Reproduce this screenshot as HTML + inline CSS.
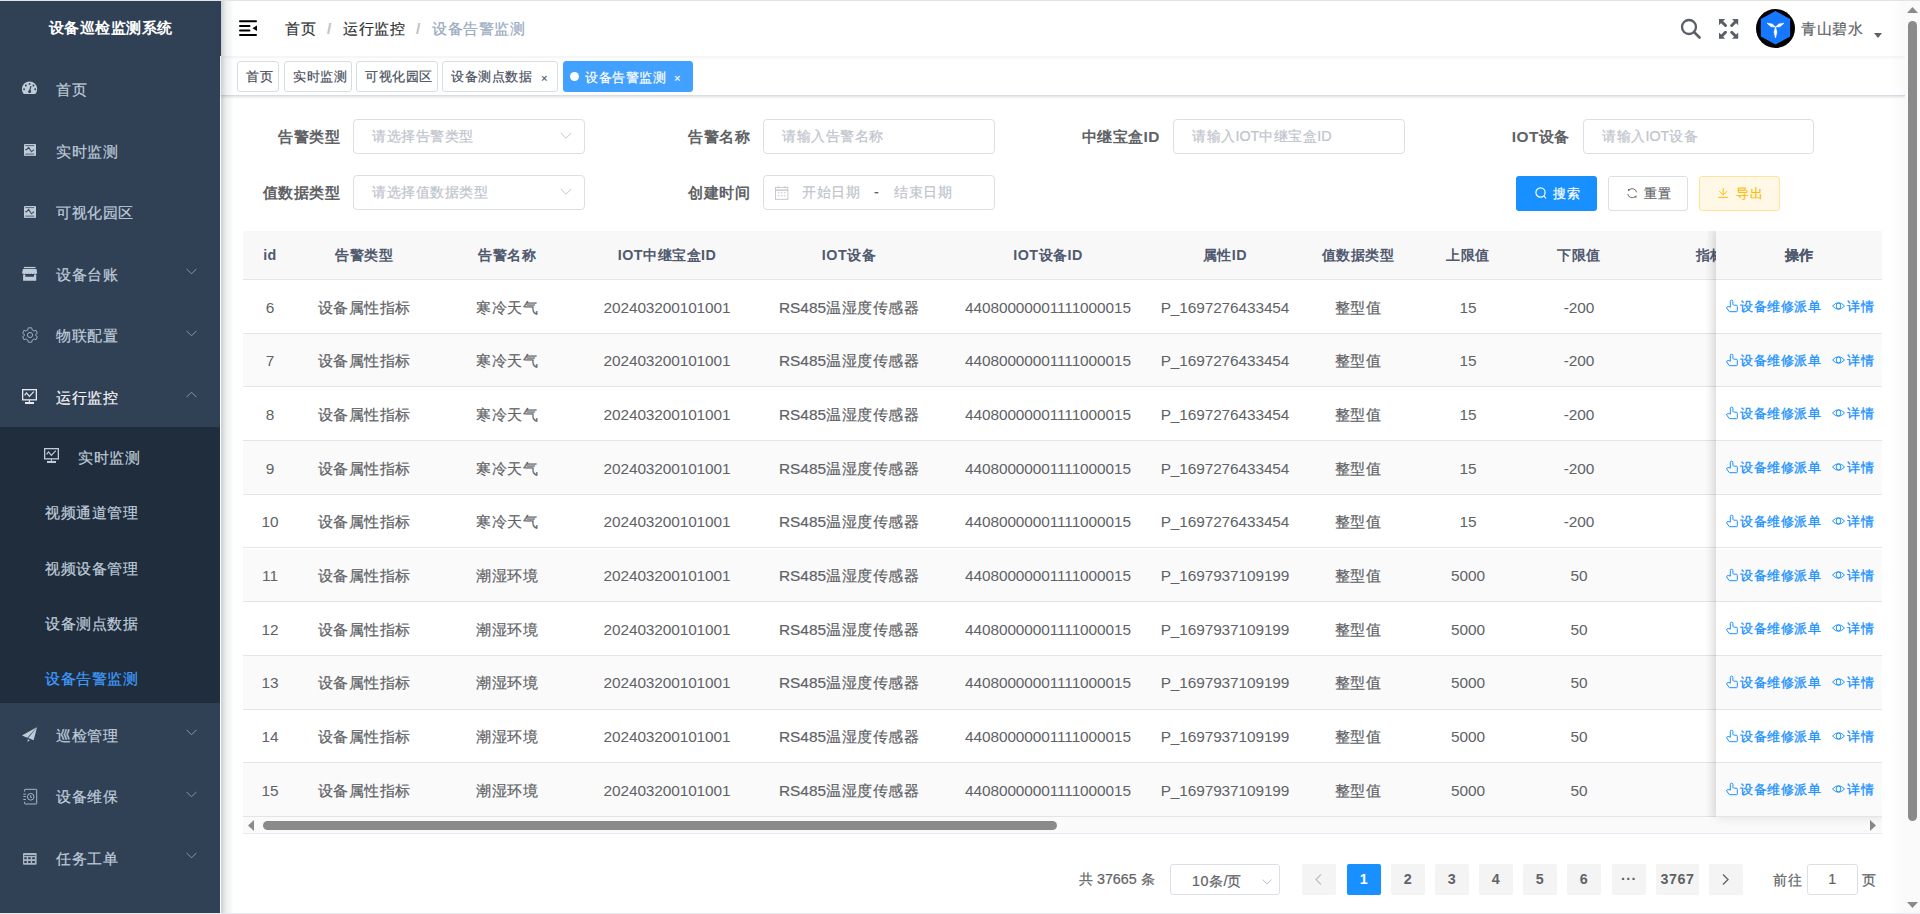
<!DOCTYPE html>
<html><head><meta charset="utf-8">
<style>
*{box-sizing:border-box;margin:0;padding:0}
html,body{width:1920px;height:914px;overflow:hidden;background:#fff;font-family:"Liberation Sans",sans-serif;}
body{-webkit-text-stroke:0.2px currentColor;letter-spacing:0.5px}
.a{letter-spacing:0}
.cell.n{letter-spacing:-0.1px}
.hd .cell,.lbl,#side .title,.pg,.cell.n{-webkit-text-stroke:0}
body{position:relative}
.abs{position:absolute}
#side{position:absolute;left:0;top:0;width:220px;height:914px;background:#304156;}
#side .title{position:absolute;left:0;top:0;width:221px;height:56px;line-height:56px;text-align:center;color:#fff;font-weight:bold;font-size:15.4px;}
.mi{position:absolute;left:0;width:220px;height:62px;color:#bfcbd9;font-size:15.4px;}
.mi svg.ic{position:absolute;left:22px;top:23px;width:16px;height:16px}
.mi .tx{position:absolute;left:56px;top:1.5px;line-height:62px;white-space:nowrap}
.mi svg.ar{position:absolute;left:186px;top:26px;width:11px;height:7px}
.sub{position:absolute;left:0;top:427px;width:220px;height:276px;background:#1f2d3d}
.si{position:absolute;left:0;width:220px;height:55px;line-height:55px;color:#bfcbd9;font-size:15.4px;}
.si .tx{position:absolute;left:45px;white-space:nowrap}
  .sep{display:inline-block;width:7px;margin:0 10px 0 10px;color:#c0c4cc;font-weight:bold;text-align:center}
#nav{position:absolute;left:221px;top:0;width:1684px;height:56px;background:#fff;z-index:2;box-shadow:0 1px 4px rgba(0,21,41,.08)}
#tags{position:absolute;left:221px;top:56px;width:1684px;height:40px;background:#fff;border-bottom:1px solid #d8dce5;box-shadow:0 1px 3px 0 rgba(0,0,0,.12),0 0 3px 0 rgba(0,0,0,.04);}
.tag{position:absolute;top:5px;height:31px;line-height:29px;border:1px solid #d8dce5;border-radius:3px;color:#495060;font-size:13.2px;padding:0 8px;background:#fff;white-space:nowrap}
.tag.act{background:#42a0ff;border-color:#42a0ff;color:#fff}
.lbl{position:absolute;font-size:15.4px;font-weight:bold;color:#606266;white-space:nowrap;text-align:right;line-height:35px}
.inp{position:absolute;height:35px;border:1px solid #dcdfe6;border-radius:4px;background:#fff;font-size:14.3px;color:#c0c4cc;line-height:33px;padding-left:18px;white-space:nowrap}
.btn{position:absolute;height:35px;border-radius:3px;font-size:13.2px;line-height:33px;white-space:nowrap}
#tbl{position:absolute;left:243px;top:231px;width:1639px;height:603px;overflow:hidden}
.row{position:absolute;left:0;width:1639px;height:54px;border-bottom:1px solid #dfe6ec;}
.cell{position:absolute;top:1.5px;height:52.7px;line-height:52.7px;text-align:center;font-size:15.4px;color:#606266;white-space:nowrap}
.hd .cell{font-weight:bold;color:#515a6e;font-size:14.3px;height:48px;line-height:48px;top:0}
.op{position:absolute;color:#1890ff;font-size:13.2px;white-space:nowrap;-webkit-text-stroke:0.3px #1890ff}
.pg{position:absolute;top:864px;height:31px;width:34px;line-height:31px;text-align:center;background:#f4f4f5;color:#606266;font-size:14.3px;font-weight:bold;border-radius:2px}
</style></head><body>

<div id="side"><div class="title">设备巡检监测系统</div>
<div class="mi" style="top:57.4px;color:#bfcbd9"><svg class="ic" style="left:22px;top:24px;width:16px;height:14px" viewBox="0 0 16 14"><path d="M1.8 13.1 A7.65 7.65 0 1 1 13.3 13.1 Z" fill="#bfcbd9"/><circle cx="7.6" cy="2.9" r="0.95" fill="#304156"/><circle cx="3.9" cy="4.5" r="0.95" fill="#304156"/><circle cx="11.4" cy="4.5" r="0.95" fill="#304156"/><circle cx="2.1" cy="8.3" r="0.95" fill="#304156"/><circle cx="13.2" cy="8.3" r="0.95" fill="#304156"/><path d="M8.9 5.2 L7.7 10" stroke="#304156" stroke-width="1.2"/><circle cx="7.6" cy="10.4" r="1.5" fill="#304156"/></svg><span class="tx">首页</span></div>
<div class="mi" style="top:119px;color:#bfcbd9"><svg class="ic" style="left:24px;top:25px;width:12px;height:12px" viewBox="0 0 12 12"><rect x="0" y="0" width="12" height="12" rx="1" fill="#bfcbd9"/><path d="M1.3 1.6 H10.2" stroke="#4b5a6e" stroke-width="0.9"/><path d="M1.3 5.6 L2.7 5.6 L4.6 3.4 L7.5 7.8 L10.1 5.6" fill="none" stroke="#3d4b5e" stroke-width="1.1"/><rect x="1.3" y="9.3" width="8.9" height="2" fill="#7f8c9c"/></svg><span class="tx">实时监测</span></div>
<div class="mi" style="top:180.6px;color:#bfcbd9"><svg class="ic" style="left:24px;top:25px;width:12px;height:12px" viewBox="0 0 12 12"><rect x="0" y="0" width="12" height="12" rx="1" fill="#bfcbd9"/><path d="M1.3 1.6 H10.2" stroke="#4b5a6e" stroke-width="0.9"/><path d="M1.3 5.6 L2.7 5.6 L4.6 3.4 L7.5 7.8 L10.1 5.6" fill="none" stroke="#3d4b5e" stroke-width="1.1"/><rect x="1.3" y="9.3" width="8.9" height="2" fill="#7f8c9c"/></svg><span class="tx">可视化园区</span></div>
<div class="mi" style="top:242.2px;color:#bfcbd9"><svg class="ic" style="left:22px;top:23.80px;width:16px;height:16px" viewBox="0 0 16 16"><rect x="1.9" y="0.9" width="11.6" height="1.3" fill="#bfcbd9"/><path d="M0.9 2.9 H14.5 L15.2 7.2 Q13.6 8.6 12.2 7.4 Q10.8 8.6 9.4 7.4 Q8 8.6 6.6 7.4 Q5.2 8.6 3.8 7.4 Q2.4 8.6 0 7.2 Z" fill="#bfcbd9"/><path d="M1.1 8.6 H3.3 V10.8 H12 V8.6 H14.2 V14.8 H1.1 Z" fill="#bfcbd9"/></svg><span class="tx">设备台账</span><svg class="ar" viewBox="0 0 11 7"><path d="M0.5 0.8 L5.5 5.8 L10.5 0.8" fill="none" stroke="#909399" stroke-width="1"/></svg></div>
<div class="mi" style="top:303.8px;color:#bfcbd9"><svg class="ic" style="left:21.5px;top:23.20px;width:16px;height:16px" viewBox="0 0 16 16"><path d="M6.3 0.8 L9.7 0.8 L10.2 2.9 L12.1 4.0 L14.1 3.3 L15.3 6.3 L13.6 7.5 L13.6 8.5 L15.3 9.7 L14.1 12.7 L12.1 12.0 L10.2 13.1 L9.7 15.2 L6.3 15.2 L5.8 13.1 L3.9 12.0 L1.9 12.7 L0.7 9.7 L2.4 8.5 L2.4 7.5 L0.7 6.3 L1.9 3.3 L3.9 4.0 L5.8 2.9 Z" fill="none" stroke="#aab5c3" stroke-width="0.9" stroke-linejoin="round"/><circle cx="8" cy="8" r="2.6" fill="none" stroke="#aab5c3" stroke-width="0.9"/></svg><span class="tx">物联配置</span><svg class="ar" viewBox="0 0 11 7"><path d="M0.5 0.8 L5.5 5.8 L10.5 0.8" fill="none" stroke="#909399" stroke-width="1"/></svg></div>
<div class="mi" style="top:365.4px;color:#f4f4f5"><svg class="ic" style="left:22px;top:23.60px;width:15px;height:16px" viewBox="0 0 15 16"><rect x="0.65" y="0.65" width="13.7" height="10.2" fill="none" stroke="#e8ebef" stroke-width="1.3"/><path d="M2.6 6.4 L4.5 3.9 L7.4 7.3 L11.8 2.6" fill="none" stroke="#e8ebef" stroke-width="1.2"/><path d="M7.4 11 V13.5" stroke="#e8ebef" stroke-width="1.1"/><rect x="3" y="13" width="9" height="2" fill="#e8ebef"/></svg><span class="tx">运行监控</span><svg class="ar" viewBox="0 0 11 7"><path d="M0.5 6.2 L5.5 1.2 L10.5 6.2" fill="none" stroke="#909399" stroke-width="1"/></svg></div>
<div class="sub">
<div class="si" style="top:3px"><svg class="ic" style="position:absolute;left:44px;top:18px;width:15px;height:16px" viewBox="0 0 15 16"><rect x="0.65" y="0.65" width="13.7" height="10.2" fill="none" stroke="#bfcbd9" stroke-width="1.3"/><path d="M2.6 6.4 L4.5 3.9 L7.4 7.3 L11.8 2.6" fill="none" stroke="#bfcbd9" stroke-width="1.2"/><path d="M7.4 11 V13.5" stroke="#bfcbd9" stroke-width="1.1"/><rect x="3" y="13" width="9" height="2" fill="#bfcbd9"/></svg><span class="tx" style="left:78px">实时监测</span></div>
<div class="si" style="top:58px"><span class="tx">视频通道管理</span></div>
<div class="si" style="top:114px"><span class="tx">视频设备管理</span></div>
<div class="si" style="top:169px"><span class="tx">设备测点数据</span></div>
<div class="si" style="top:224px;color:#409eff"><span class="tx">设备告警监测</span></div>
</div>
<div class="mi" style="top:703px;color:#bfcbd9"><svg class="ic" style="left:22px;top:23.00px;width:16px;height:17px" viewBox="0 0 16 17"><path d="M15.1 1.1 L0 9.6 L5.3 11.8 Z" fill="#bfcbd9"/><path d="M15.1 1.3 L6.2 12.1 L11.6 14.2 Z" fill="#bfcbd9"/><path d="M5.8 13 L7.6 14.3 L5.6 15.9 Z" fill="#bfcbd9"/></svg><span class="tx">巡检管理</span><svg class="ar" viewBox="0 0 11 7"><path d="M0.5 0.8 L5.5 5.8 L10.5 0.8" fill="none" stroke="#909399" stroke-width="1"/></svg></div>
<div class="mi" style="top:764.6px;color:#bfcbd9"><svg class="ic" style="left:22px;top:23.40px;width:16px;height:17px" viewBox="0 0 16 17"><path d="M2.6 3.5 V1.8 Q2.6 1.3 3.1 1.3 H14.2 Q14.7 1.3 14.7 1.8 V15.5 Q14.7 16 14.2 16 H3.1 Q2.6 16 2.6 15.5 V13.8" fill="none" stroke="#aab5c3" stroke-width="1"/><path d="M1.3 6.2 H3.8 M1.3 8.6 H3.8 M1.3 11.5 H3.8" stroke="#aab5c3" stroke-width="1"/><circle cx="8.7" cy="8.8" r="3.3" fill="none" stroke="#aab5c3" stroke-width="1"/><path d="M8.6 7.3 V9.3 H10" fill="none" stroke="#aab5c3" stroke-width="1"/></svg><span class="tx">设备维保</span><svg class="ar" viewBox="0 0 11 7"><path d="M0.5 0.8 L5.5 5.8 L10.5 0.8" fill="none" stroke="#909399" stroke-width="1"/></svg></div>
<div class="mi" style="top:826.2px;color:#bfcbd9"><svg class="ic" style="left:23px;top:26.80px;width:14px;height:12px" viewBox="0 0 14 12"><rect x="0" y="0" width="13.6" height="11.8" rx="0.8" fill="#aab5c3"/><rect x="1.3" y="2" width="11.2" height="0.8" fill="#2c3a4d"/><rect x="1.3" y="4.3" width="2.4" height="1.9" fill="#2c3a4d"/><rect x="5.2" y="4.3" width="2.5" height="1.9" fill="#2c3a4d"/><rect x="9.2" y="4.3" width="2.6" height="1.9" fill="#2c3a4d"/><rect x="1.3" y="8" width="2.4" height="2" fill="#2c3a4d"/><rect x="5.2" y="8" width="2.5" height="2" fill="#2c3a4d"/><rect x="9.2" y="8" width="2.6" height="2" fill="#2c3a4d"/></svg><span class="tx">任务工单</span><svg class="ar" viewBox="0 0 11 7"><path d="M0.5 0.8 L5.5 5.8 L10.5 0.8" fill="none" stroke="#909399" stroke-width="1"/></svg></div>
</div>
<div class="abs" style="left:220px;top:56px;width:1px;height:858px;background:#fff"></div>
<div id="nav">
<svg class="abs" style="left:18px;top:20px;width:18px;height:16px" viewBox="0 0 18 16"><rect x="0" y="0.3" width="18" height="2" rx="1" fill="#000"/><rect x="0" y="5" width="11.5" height="2" rx="1" fill="#000"/><rect x="0" y="9.6" width="11.5" height="2" rx="1" fill="#000"/><rect x="0" y="14" width="18" height="2" rx="1" fill="#000"/><path d="M13.5 8.2 L18 5.5 L18 11z" fill="#000"/></svg>
<div class="abs" style="left:64px;top:0;line-height:58px;font-size:15.4px;color:#303133;white-space:nowrap">首页<span class="sep">/</span>运行监控<span class="sep">/</span><span style="color:#97a8be">设备告警监测</span></div>
<svg class="abs" style="left:1459px;top:18px;width:22px;height:22px" viewBox="0 0 22 22"><circle cx="9" cy="9" r="7" fill="none" stroke="#5a5e66" stroke-width="2.3"/><path d="M14 14 L19.5 19.5" stroke="#5a5e66" stroke-width="2.6" stroke-linecap="round"/></svg>
<svg class="abs" style="left:1498px;top:19px;width:20px;height:20px" viewBox="0 0 20 20" fill="#5a5e66" stroke="#5a5e66"><g stroke="none"><path d="M0 0h6.2L0 6.2z"/><path d="M19.2 0h-6.2L19.2 6.2z"/><path d="M0 19.8h6.2L0 13.6z"/><path d="M19.2 19.8h-6.2L19.2 13.6z"/></g><path d="M2.5 2.5 L6.5 6.5 M16.7 2.5 L12.7 6.5 M2.5 17.3 L6.5 13.3 M16.7 17.3 L12.7 13.3" stroke-width="3" stroke-linecap="round" fill="none"/></svg>
<svg class="abs" style="left:1535px;top:9px;width:39px;height:39px" viewBox="0 0 39 39"><circle cx="19.5" cy="19.5" r="19.5" fill="#000"/><path d="M19.5 1.9 L34.1 10.1 L34.1 27.4 L19.5 35.6 L4.8 27.4 L4.8 10.1z" fill="#1677ff"/><path d="M19.50 18.10 L16.28 15.03 L11.00 14.20 L15.07 17.66 Z M19.50 18.10 L23.93 17.66 L28.00 14.20 L22.72 15.03 Z M19.50 18.10 L18.05 23.01 L19.50 29.00 L20.95 23.01 Z" fill="#fff" stroke="#fff" stroke-width="0.6" stroke-linejoin="round"/></svg>
<div class="abs" style="left:1580px;top:0;line-height:58px;font-size:15.4px;color:#606266;white-space:nowrap">青山碧水</div>
<svg class="abs" style="left:1653px;top:33px;width:8px;height:5px" viewBox="0 0 8 5"><path d="M0 0h8l-4 5z" fill="#606266"/></svg>
</div>
<div id="tags">
<div class="tag" style="left:16px;width:42px">首页</div>
<div class="tag" style="left:63px;width:68px">实时监测</div>
<div class="tag" style="left:135px;width:82px">可视化园区</div>
<div class="tag" style="left:221px;width:116px">设备测点数据<span style="position:absolute;left:98px;top:1.5px;font-size:11px">×</span></div>
<div class="tag act" style="left:342px;width:130px"><span style="position:absolute;left:6px;top:10px;width:9px;height:9px;border-radius:50%;background:#fff"></span><span style="position:absolute;left:21px;top:0.5px;-webkit-text-stroke:0.2px #fff">设备告警监测</span><span style="position:absolute;left:110px;top:1.5px;font-size:11px">×</span></div>
</div>
<div class="abs" style="left:220px;top:0;width:1px;height:56px;background:#304156"></div>
<div class="abs" style="left:221px;top:0;width:13px;height:914px;z-index:3;background:linear-gradient(to right,rgba(0,21,41,.2),rgba(0,21,41,.07) 40%,rgba(0,21,41,0))"></div>
<div class="lbl" style="left:190px;top:119px;width:150px">告警类型</div>
<div class="lbl" style="left:190px;top:175px;width:150px">值数据类型</div>
<div class="lbl" style="left:600px;top:119px;width:150px">告警名称</div>
<div class="lbl" style="left:600px;top:175px;width:150px">创建时间</div>
<div class="lbl" style="left:1010px;top:119px;width:150px">中继宝盒ID</div>
<div class="lbl" style="left:1420px;top:119px;width:150px">IOT设备</div>
<div class="inp" style="left:353px;top:119px;width:232px">请选择告警类型<svg style="position:absolute;right:12px;top:12.3px;width:12px;height:8px" viewBox="0 0 12 8"><path d="M0.8 1 L6 6.2 L11.2 1" fill="none" stroke="#b8bcc4" stroke-width="0.85"/></svg></div>
<div class="inp" style="left:353px;top:175px;width:232px">请选择值数据类型<svg style="position:absolute;right:12px;top:12.3px;width:12px;height:8px" viewBox="0 0 12 8"><path d="M0.8 1 L6 6.2 L11.2 1" fill="none" stroke="#b8bcc4" stroke-width="0.85"/></svg></div>
<div class="inp" style="left:763px;top:119px;width:232px">请输入告警名称</div>
<div class="inp" style="left:763px;top:175px;width:232px;padding-left:0"><svg style="position:absolute;left:11px;top:8.5px;width:14px;height:15px" viewBox="0 0 14 15"><rect x="0.5" y="2.4" width="12.4" height="11.9" fill="none" stroke="#c0c4cc" stroke-width="0.9"/><rect x="0.5" y="4.5" width="12.4" height="1.3" fill="#c0c4cc"/><path d="M3.4 1 V3.3 M10 1 V3.3" stroke="#c0c4cc" stroke-width="0.9"/><path d="M2.9 7.8h1.6M5.9 7.8h1.6M8.9 7.8h1.6M2.9 10.8h1.6M5.9 10.8h1.6M8.9 10.8h1.6" stroke="#c0c4cc" stroke-width="1"/></svg><span style="position:absolute;left:38px">开始日期</span><span style="position:absolute;left:110px;color:#606266">-</span><span style="position:absolute;left:130px">结束日期</span></div>
<div class="inp" style="left:1173px;top:119px;width:232px">请输入<span class="a">IOT</span>中继宝盒<span class="a">ID</span></div>
<div class="inp" style="left:1583px;top:119px;width:231px">请输入<span class="a">IOT</span>设备</div>
<div class="btn" style="left:1516px;top:176px;width:81px;background:#1890ff;color:#fff"><svg style="position:absolute;left:19px;top:11px;width:12px;height:13px" viewBox="0 0 12 13"><circle cx="5.5" cy="5.5" r="4.6" fill="none" stroke="#fff" stroke-width="1.2"/><path d="M9 9 L11 11.5" stroke="#fff" stroke-width="1.2"/></svg><span style="position:absolute;left:37px;top:1px">搜索</span></div>
<div class="btn" style="left:1608px;top:176px;width:80px;border:1px solid #dcdfe6;color:#606266"><svg style="position:absolute;left:17.5px;top:10.5px;width:11px;height:11px" viewBox="0 0 11 11"><path d="M1.9 2.1 A4.5 4.5 0 0 1 9.65 4.4 M8.4 8.4 A4.5 4.5 0 0 1 0.75 6" fill="none" stroke="#606266" stroke-width="0.9"/><path d="M0.9 1.0 L3.4 1.3 L1.3 3.5z M9.6 9.6 L7.1 9.4 L9.3 7.2z" fill="#606266"/></svg><span style="position:absolute;left:35px">重置</span></div>
<div class="btn" style="left:1699px;top:176px;width:81px;border:1px solid #ffe399;background:#fff8e6;color:#ffba00"><svg style="position:absolute;left:17.5px;top:10px;width:11px;height:12px" viewBox="0 0 11 12"><path d="M5.2 1 V7.6 M1.3 4.2 L5.2 7.8 L9.1 4.2 M0.2 10.4 H10.2" fill="none" stroke="#ffba00" stroke-width="0.95"/></svg><span style="position:absolute;left:36px">导出</span></div>
<div id="tbl">
<div class="row hd" style="top:0;height:49px;background:#f8f8f9">
<div class="cell" style="left:0px;width:54px">id</div>
<div class="cell" style="left:54px;width:134px">告警类型</div>
<div class="cell" style="left:188px;width:152px">告警名称</div>
<div class="cell" style="left:340px;width:168px">IOT中继宝盒ID</div>
<div class="cell" style="left:508px;width:196px">IOT设备</div>
<div class="cell" style="left:704px;width:202px">IOT设备ID</div>
<div class="cell" style="left:906px;width:152px">属性ID</div>
<div class="cell" style="left:1058px;width:114px">值数据类型</div>
<div class="cell" style="left:1172px;width:106px">上限值</div>
<div class="cell" style="left:1278px;width:116px">下限值</div>
<div class="cell" style="left:1398.5px;width:166px">指标名称</div>
</div>
<div class="row" style="top:49.0px;height:53.7px;background:#fff">
<div class="cell n" style="left:0px;width:54px">6</div>
<div class="cell" style="left:54px;width:134px">设备属性指标</div>
<div class="cell" style="left:188px;width:152px">寒冷天气</div>
<div class="cell n" style="left:340px;width:168px">202403200101001</div>
<div class="cell" style="left:508px;width:196px"><span class="a">RS485</span>温湿度传感器</div>
<div class="cell n" style="left:704px;width:202px">44080000001111000015</div>
<div class="cell n" style="left:906px;width:152px">P_1697276433454</div>
<div class="cell" style="left:1058px;width:114px">整型值</div>
<div class="cell n" style="left:1172px;width:106px">15</div>
<div class="cell n" style="left:1278px;width:116px">-200</div>
<div class="cell n" style="left:1394px;width:166px"></div>
</div>
<div class="row" style="top:102.7px;height:53.7px;background:#fafafa">
<div class="cell n" style="left:0px;width:54px">7</div>
<div class="cell" style="left:54px;width:134px">设备属性指标</div>
<div class="cell" style="left:188px;width:152px">寒冷天气</div>
<div class="cell n" style="left:340px;width:168px">202403200101001</div>
<div class="cell" style="left:508px;width:196px"><span class="a">RS485</span>温湿度传感器</div>
<div class="cell n" style="left:704px;width:202px">44080000001111000015</div>
<div class="cell n" style="left:906px;width:152px">P_1697276433454</div>
<div class="cell" style="left:1058px;width:114px">整型值</div>
<div class="cell n" style="left:1172px;width:106px">15</div>
<div class="cell n" style="left:1278px;width:116px">-200</div>
<div class="cell n" style="left:1394px;width:166px"></div>
</div>
<div class="row" style="top:156.4px;height:53.7px;background:#fff">
<div class="cell n" style="left:0px;width:54px">8</div>
<div class="cell" style="left:54px;width:134px">设备属性指标</div>
<div class="cell" style="left:188px;width:152px">寒冷天气</div>
<div class="cell n" style="left:340px;width:168px">202403200101001</div>
<div class="cell" style="left:508px;width:196px"><span class="a">RS485</span>温湿度传感器</div>
<div class="cell n" style="left:704px;width:202px">44080000001111000015</div>
<div class="cell n" style="left:906px;width:152px">P_1697276433454</div>
<div class="cell" style="left:1058px;width:114px">整型值</div>
<div class="cell n" style="left:1172px;width:106px">15</div>
<div class="cell n" style="left:1278px;width:116px">-200</div>
<div class="cell n" style="left:1394px;width:166px"></div>
</div>
<div class="row" style="top:210.1px;height:53.7px;background:#fafafa">
<div class="cell n" style="left:0px;width:54px">9</div>
<div class="cell" style="left:54px;width:134px">设备属性指标</div>
<div class="cell" style="left:188px;width:152px">寒冷天气</div>
<div class="cell n" style="left:340px;width:168px">202403200101001</div>
<div class="cell" style="left:508px;width:196px"><span class="a">RS485</span>温湿度传感器</div>
<div class="cell n" style="left:704px;width:202px">44080000001111000015</div>
<div class="cell n" style="left:906px;width:152px">P_1697276433454</div>
<div class="cell" style="left:1058px;width:114px">整型值</div>
<div class="cell n" style="left:1172px;width:106px">15</div>
<div class="cell n" style="left:1278px;width:116px">-200</div>
<div class="cell n" style="left:1394px;width:166px"></div>
</div>
<div class="row" style="top:263.8px;height:53.7px;background:#fff">
<div class="cell n" style="left:0px;width:54px">10</div>
<div class="cell" style="left:54px;width:134px">设备属性指标</div>
<div class="cell" style="left:188px;width:152px">寒冷天气</div>
<div class="cell n" style="left:340px;width:168px">202403200101001</div>
<div class="cell" style="left:508px;width:196px"><span class="a">RS485</span>温湿度传感器</div>
<div class="cell n" style="left:704px;width:202px">44080000001111000015</div>
<div class="cell n" style="left:906px;width:152px">P_1697276433454</div>
<div class="cell" style="left:1058px;width:114px">整型值</div>
<div class="cell n" style="left:1172px;width:106px">15</div>
<div class="cell n" style="left:1278px;width:116px">-200</div>
<div class="cell n" style="left:1394px;width:166px"></div>
</div>
<div class="row" style="top:317.5px;height:53.7px;background:#fafafa">
<div class="cell n" style="left:0px;width:54px">11</div>
<div class="cell" style="left:54px;width:134px">设备属性指标</div>
<div class="cell" style="left:188px;width:152px">潮湿环境</div>
<div class="cell n" style="left:340px;width:168px">202403200101001</div>
<div class="cell" style="left:508px;width:196px"><span class="a">RS485</span>温湿度传感器</div>
<div class="cell n" style="left:704px;width:202px">44080000001111000015</div>
<div class="cell n" style="left:906px;width:152px">P_1697937109199</div>
<div class="cell" style="left:1058px;width:114px">整型值</div>
<div class="cell n" style="left:1172px;width:106px">5000</div>
<div class="cell n" style="left:1278px;width:116px">50</div>
<div class="cell n" style="left:1394px;width:166px"></div>
</div>
<div class="row" style="top:371.2px;height:53.7px;background:#fff">
<div class="cell n" style="left:0px;width:54px">12</div>
<div class="cell" style="left:54px;width:134px">设备属性指标</div>
<div class="cell" style="left:188px;width:152px">潮湿环境</div>
<div class="cell n" style="left:340px;width:168px">202403200101001</div>
<div class="cell" style="left:508px;width:196px"><span class="a">RS485</span>温湿度传感器</div>
<div class="cell n" style="left:704px;width:202px">44080000001111000015</div>
<div class="cell n" style="left:906px;width:152px">P_1697937109199</div>
<div class="cell" style="left:1058px;width:114px">整型值</div>
<div class="cell n" style="left:1172px;width:106px">5000</div>
<div class="cell n" style="left:1278px;width:116px">50</div>
<div class="cell n" style="left:1394px;width:166px"></div>
</div>
<div class="row" style="top:424.9px;height:53.7px;background:#fafafa">
<div class="cell n" style="left:0px;width:54px">13</div>
<div class="cell" style="left:54px;width:134px">设备属性指标</div>
<div class="cell" style="left:188px;width:152px">潮湿环境</div>
<div class="cell n" style="left:340px;width:168px">202403200101001</div>
<div class="cell" style="left:508px;width:196px"><span class="a">RS485</span>温湿度传感器</div>
<div class="cell n" style="left:704px;width:202px">44080000001111000015</div>
<div class="cell n" style="left:906px;width:152px">P_1697937109199</div>
<div class="cell" style="left:1058px;width:114px">整型值</div>
<div class="cell n" style="left:1172px;width:106px">5000</div>
<div class="cell n" style="left:1278px;width:116px">50</div>
<div class="cell n" style="left:1394px;width:166px"></div>
</div>
<div class="row" style="top:478.6px;height:53.7px;background:#fff">
<div class="cell n" style="left:0px;width:54px">14</div>
<div class="cell" style="left:54px;width:134px">设备属性指标</div>
<div class="cell" style="left:188px;width:152px">潮湿环境</div>
<div class="cell n" style="left:340px;width:168px">202403200101001</div>
<div class="cell" style="left:508px;width:196px"><span class="a">RS485</span>温湿度传感器</div>
<div class="cell n" style="left:704px;width:202px">44080000001111000015</div>
<div class="cell n" style="left:906px;width:152px">P_1697937109199</div>
<div class="cell" style="left:1058px;width:114px">整型值</div>
<div class="cell n" style="left:1172px;width:106px">5000</div>
<div class="cell n" style="left:1278px;width:116px">50</div>
<div class="cell n" style="left:1394px;width:166px"></div>
</div>
<div class="row" style="top:532.3px;height:53.7px;background:#fafafa">
<div class="cell n" style="left:0px;width:54px">15</div>
<div class="cell" style="left:54px;width:134px">设备属性指标</div>
<div class="cell" style="left:188px;width:152px">潮湿环境</div>
<div class="cell n" style="left:340px;width:168px">202403200101001</div>
<div class="cell" style="left:508px;width:196px"><span class="a">RS485</span>温湿度传感器</div>
<div class="cell n" style="left:704px;width:202px">44080000001111000015</div>
<div class="cell n" style="left:906px;width:152px">P_1697937109199</div>
<div class="cell" style="left:1058px;width:114px">整型值</div>
<div class="cell n" style="left:1172px;width:106px">5000</div>
<div class="cell n" style="left:1278px;width:116px">50</div>
<div class="cell n" style="left:1394px;width:166px"></div>
</div>
<div class="abs" style="left:0;top:586px;width:1639px;height:17px;background:#fafafa;border-bottom:1px solid #e6ebf5"></div>
<svg class="abs" style="left:5px;top:589px;width:6px;height:11px" viewBox="0 0 6 11"><path d="M6 0 L0 5.5 L6 11z" fill="#8a8a8a"/></svg>
<div class="abs" style="left:20px;top:590px;width:794px;height:9px;border-radius:4.5px;background:#8a8a8a"></div>
<svg class="abs" style="left:1627px;top:589px;width:6px;height:11px" viewBox="0 0 6 11"><path d="M0 0 L6 5.5 L0 11z" fill="#8a8a8a"/></svg>
<div class="abs" style="left:1462px;top:0;width:11px;height:586px;background:linear-gradient(to right,rgba(0,0,0,0),rgba(0,0,0,.06))"></div>
<div class="abs" style="left:1473px;top:0;width:166px;height:586px;box-shadow:0 0 10px rgba(0,0,0,.12)">
<div class="abs" style="left:0;top:0;width:166px;height:49px;background:#f8f8f9;border-bottom:1px solid #dfe6ec;text-align:center;line-height:48px;font-size:14.3px;font-weight:bold;color:#515a6e">操作</div>
<div class="abs" style="left:0;top:49.0px;width:166px;height:53.7px;background:#fff;border-bottom:1px solid #dfe6ec">
<div class="abs" style="left:10px;top:0;width:156px;height:52.7px"><svg style="position:absolute;left:-4px;top:16px;width:22px;height:20px" viewBox="0 0 22 20"><path d="M8.3 11.2 V5.4 Q8.3 4.2 9.6 4.2 Q10.9 4.2 10.9 5.4 V8.3 Q11.2 9.2 12.2 9.2 H14.3 Q15.3 9.2 15.3 10.3 V14.9 Q15.3 15.7 14.5 15.7 H7.8 Q7.2 15.7 6.9 15.2 L4.7 11.9 Q4.3 11.2 5.1 10.8 Q6.8 10 8.3 11.2" fill="none" stroke="#1890ff" stroke-width="1" stroke-linejoin="round"/></svg><span class="op" style="left:14px;top:1px;line-height:52.7px">设备维修派单</span><svg style="position:absolute;left:106px;top:21px;width:13px;height:10px" viewBox="0 0 13 10"><path d="M0.5 5 Q6.5 -1.6 12.5 5 Q6.5 11.6 0.5 5 Z" fill="none" stroke="#1890ff" stroke-width="0.95"/><ellipse cx="6.5" cy="5" rx="2.3" ry="2.9" fill="none" stroke="#1890ff" stroke-width="0.95"/></svg><span class="op" style="left:121px;top:1px;line-height:52.7px">详情</span></div>
</div>
<div class="abs" style="left:0;top:102.7px;width:166px;height:53.7px;background:#fafafa;border-bottom:1px solid #dfe6ec">
<div class="abs" style="left:10px;top:0;width:156px;height:52.7px"><svg style="position:absolute;left:-4px;top:16px;width:22px;height:20px" viewBox="0 0 22 20"><path d="M8.3 11.2 V5.4 Q8.3 4.2 9.6 4.2 Q10.9 4.2 10.9 5.4 V8.3 Q11.2 9.2 12.2 9.2 H14.3 Q15.3 9.2 15.3 10.3 V14.9 Q15.3 15.7 14.5 15.7 H7.8 Q7.2 15.7 6.9 15.2 L4.7 11.9 Q4.3 11.2 5.1 10.8 Q6.8 10 8.3 11.2" fill="none" stroke="#1890ff" stroke-width="1" stroke-linejoin="round"/></svg><span class="op" style="left:14px;top:1px;line-height:52.7px">设备维修派单</span><svg style="position:absolute;left:106px;top:21px;width:13px;height:10px" viewBox="0 0 13 10"><path d="M0.5 5 Q6.5 -1.6 12.5 5 Q6.5 11.6 0.5 5 Z" fill="none" stroke="#1890ff" stroke-width="0.95"/><ellipse cx="6.5" cy="5" rx="2.3" ry="2.9" fill="none" stroke="#1890ff" stroke-width="0.95"/></svg><span class="op" style="left:121px;top:1px;line-height:52.7px">详情</span></div>
</div>
<div class="abs" style="left:0;top:156.4px;width:166px;height:53.7px;background:#fff;border-bottom:1px solid #dfe6ec">
<div class="abs" style="left:10px;top:0;width:156px;height:52.7px"><svg style="position:absolute;left:-4px;top:16px;width:22px;height:20px" viewBox="0 0 22 20"><path d="M8.3 11.2 V5.4 Q8.3 4.2 9.6 4.2 Q10.9 4.2 10.9 5.4 V8.3 Q11.2 9.2 12.2 9.2 H14.3 Q15.3 9.2 15.3 10.3 V14.9 Q15.3 15.7 14.5 15.7 H7.8 Q7.2 15.7 6.9 15.2 L4.7 11.9 Q4.3 11.2 5.1 10.8 Q6.8 10 8.3 11.2" fill="none" stroke="#1890ff" stroke-width="1" stroke-linejoin="round"/></svg><span class="op" style="left:14px;top:1px;line-height:52.7px">设备维修派单</span><svg style="position:absolute;left:106px;top:21px;width:13px;height:10px" viewBox="0 0 13 10"><path d="M0.5 5 Q6.5 -1.6 12.5 5 Q6.5 11.6 0.5 5 Z" fill="none" stroke="#1890ff" stroke-width="0.95"/><ellipse cx="6.5" cy="5" rx="2.3" ry="2.9" fill="none" stroke="#1890ff" stroke-width="0.95"/></svg><span class="op" style="left:121px;top:1px;line-height:52.7px">详情</span></div>
</div>
<div class="abs" style="left:0;top:210.1px;width:166px;height:53.7px;background:#fafafa;border-bottom:1px solid #dfe6ec">
<div class="abs" style="left:10px;top:0;width:156px;height:52.7px"><svg style="position:absolute;left:-4px;top:16px;width:22px;height:20px" viewBox="0 0 22 20"><path d="M8.3 11.2 V5.4 Q8.3 4.2 9.6 4.2 Q10.9 4.2 10.9 5.4 V8.3 Q11.2 9.2 12.2 9.2 H14.3 Q15.3 9.2 15.3 10.3 V14.9 Q15.3 15.7 14.5 15.7 H7.8 Q7.2 15.7 6.9 15.2 L4.7 11.9 Q4.3 11.2 5.1 10.8 Q6.8 10 8.3 11.2" fill="none" stroke="#1890ff" stroke-width="1" stroke-linejoin="round"/></svg><span class="op" style="left:14px;top:1px;line-height:52.7px">设备维修派单</span><svg style="position:absolute;left:106px;top:21px;width:13px;height:10px" viewBox="0 0 13 10"><path d="M0.5 5 Q6.5 -1.6 12.5 5 Q6.5 11.6 0.5 5 Z" fill="none" stroke="#1890ff" stroke-width="0.95"/><ellipse cx="6.5" cy="5" rx="2.3" ry="2.9" fill="none" stroke="#1890ff" stroke-width="0.95"/></svg><span class="op" style="left:121px;top:1px;line-height:52.7px">详情</span></div>
</div>
<div class="abs" style="left:0;top:263.8px;width:166px;height:53.7px;background:#fff;border-bottom:1px solid #dfe6ec">
<div class="abs" style="left:10px;top:0;width:156px;height:52.7px"><svg style="position:absolute;left:-4px;top:16px;width:22px;height:20px" viewBox="0 0 22 20"><path d="M8.3 11.2 V5.4 Q8.3 4.2 9.6 4.2 Q10.9 4.2 10.9 5.4 V8.3 Q11.2 9.2 12.2 9.2 H14.3 Q15.3 9.2 15.3 10.3 V14.9 Q15.3 15.7 14.5 15.7 H7.8 Q7.2 15.7 6.9 15.2 L4.7 11.9 Q4.3 11.2 5.1 10.8 Q6.8 10 8.3 11.2" fill="none" stroke="#1890ff" stroke-width="1" stroke-linejoin="round"/></svg><span class="op" style="left:14px;top:1px;line-height:52.7px">设备维修派单</span><svg style="position:absolute;left:106px;top:21px;width:13px;height:10px" viewBox="0 0 13 10"><path d="M0.5 5 Q6.5 -1.6 12.5 5 Q6.5 11.6 0.5 5 Z" fill="none" stroke="#1890ff" stroke-width="0.95"/><ellipse cx="6.5" cy="5" rx="2.3" ry="2.9" fill="none" stroke="#1890ff" stroke-width="0.95"/></svg><span class="op" style="left:121px;top:1px;line-height:52.7px">详情</span></div>
</div>
<div class="abs" style="left:0;top:317.5px;width:166px;height:53.7px;background:#fafafa;border-bottom:1px solid #dfe6ec">
<div class="abs" style="left:10px;top:0;width:156px;height:52.7px"><svg style="position:absolute;left:-4px;top:16px;width:22px;height:20px" viewBox="0 0 22 20"><path d="M8.3 11.2 V5.4 Q8.3 4.2 9.6 4.2 Q10.9 4.2 10.9 5.4 V8.3 Q11.2 9.2 12.2 9.2 H14.3 Q15.3 9.2 15.3 10.3 V14.9 Q15.3 15.7 14.5 15.7 H7.8 Q7.2 15.7 6.9 15.2 L4.7 11.9 Q4.3 11.2 5.1 10.8 Q6.8 10 8.3 11.2" fill="none" stroke="#1890ff" stroke-width="1" stroke-linejoin="round"/></svg><span class="op" style="left:14px;top:1px;line-height:52.7px">设备维修派单</span><svg style="position:absolute;left:106px;top:21px;width:13px;height:10px" viewBox="0 0 13 10"><path d="M0.5 5 Q6.5 -1.6 12.5 5 Q6.5 11.6 0.5 5 Z" fill="none" stroke="#1890ff" stroke-width="0.95"/><ellipse cx="6.5" cy="5" rx="2.3" ry="2.9" fill="none" stroke="#1890ff" stroke-width="0.95"/></svg><span class="op" style="left:121px;top:1px;line-height:52.7px">详情</span></div>
</div>
<div class="abs" style="left:0;top:371.2px;width:166px;height:53.7px;background:#fff;border-bottom:1px solid #dfe6ec">
<div class="abs" style="left:10px;top:0;width:156px;height:52.7px"><svg style="position:absolute;left:-4px;top:16px;width:22px;height:20px" viewBox="0 0 22 20"><path d="M8.3 11.2 V5.4 Q8.3 4.2 9.6 4.2 Q10.9 4.2 10.9 5.4 V8.3 Q11.2 9.2 12.2 9.2 H14.3 Q15.3 9.2 15.3 10.3 V14.9 Q15.3 15.7 14.5 15.7 H7.8 Q7.2 15.7 6.9 15.2 L4.7 11.9 Q4.3 11.2 5.1 10.8 Q6.8 10 8.3 11.2" fill="none" stroke="#1890ff" stroke-width="1" stroke-linejoin="round"/></svg><span class="op" style="left:14px;top:1px;line-height:52.7px">设备维修派单</span><svg style="position:absolute;left:106px;top:21px;width:13px;height:10px" viewBox="0 0 13 10"><path d="M0.5 5 Q6.5 -1.6 12.5 5 Q6.5 11.6 0.5 5 Z" fill="none" stroke="#1890ff" stroke-width="0.95"/><ellipse cx="6.5" cy="5" rx="2.3" ry="2.9" fill="none" stroke="#1890ff" stroke-width="0.95"/></svg><span class="op" style="left:121px;top:1px;line-height:52.7px">详情</span></div>
</div>
<div class="abs" style="left:0;top:424.9px;width:166px;height:53.7px;background:#fafafa;border-bottom:1px solid #dfe6ec">
<div class="abs" style="left:10px;top:0;width:156px;height:52.7px"><svg style="position:absolute;left:-4px;top:16px;width:22px;height:20px" viewBox="0 0 22 20"><path d="M8.3 11.2 V5.4 Q8.3 4.2 9.6 4.2 Q10.9 4.2 10.9 5.4 V8.3 Q11.2 9.2 12.2 9.2 H14.3 Q15.3 9.2 15.3 10.3 V14.9 Q15.3 15.7 14.5 15.7 H7.8 Q7.2 15.7 6.9 15.2 L4.7 11.9 Q4.3 11.2 5.1 10.8 Q6.8 10 8.3 11.2" fill="none" stroke="#1890ff" stroke-width="1" stroke-linejoin="round"/></svg><span class="op" style="left:14px;top:1px;line-height:52.7px">设备维修派单</span><svg style="position:absolute;left:106px;top:21px;width:13px;height:10px" viewBox="0 0 13 10"><path d="M0.5 5 Q6.5 -1.6 12.5 5 Q6.5 11.6 0.5 5 Z" fill="none" stroke="#1890ff" stroke-width="0.95"/><ellipse cx="6.5" cy="5" rx="2.3" ry="2.9" fill="none" stroke="#1890ff" stroke-width="0.95"/></svg><span class="op" style="left:121px;top:1px;line-height:52.7px">详情</span></div>
</div>
<div class="abs" style="left:0;top:478.6px;width:166px;height:53.7px;background:#fff;border-bottom:1px solid #dfe6ec">
<div class="abs" style="left:10px;top:0;width:156px;height:52.7px"><svg style="position:absolute;left:-4px;top:16px;width:22px;height:20px" viewBox="0 0 22 20"><path d="M8.3 11.2 V5.4 Q8.3 4.2 9.6 4.2 Q10.9 4.2 10.9 5.4 V8.3 Q11.2 9.2 12.2 9.2 H14.3 Q15.3 9.2 15.3 10.3 V14.9 Q15.3 15.7 14.5 15.7 H7.8 Q7.2 15.7 6.9 15.2 L4.7 11.9 Q4.3 11.2 5.1 10.8 Q6.8 10 8.3 11.2" fill="none" stroke="#1890ff" stroke-width="1" stroke-linejoin="round"/></svg><span class="op" style="left:14px;top:1px;line-height:52.7px">设备维修派单</span><svg style="position:absolute;left:106px;top:21px;width:13px;height:10px" viewBox="0 0 13 10"><path d="M0.5 5 Q6.5 -1.6 12.5 5 Q6.5 11.6 0.5 5 Z" fill="none" stroke="#1890ff" stroke-width="0.95"/><ellipse cx="6.5" cy="5" rx="2.3" ry="2.9" fill="none" stroke="#1890ff" stroke-width="0.95"/></svg><span class="op" style="left:121px;top:1px;line-height:52.7px">详情</span></div>
</div>
<div class="abs" style="left:0;top:532.3px;width:166px;height:53.7px;background:#fafafa;border-bottom:1px solid #dfe6ec">
<div class="abs" style="left:10px;top:0;width:156px;height:52.7px"><svg style="position:absolute;left:-4px;top:16px;width:22px;height:20px" viewBox="0 0 22 20"><path d="M8.3 11.2 V5.4 Q8.3 4.2 9.6 4.2 Q10.9 4.2 10.9 5.4 V8.3 Q11.2 9.2 12.2 9.2 H14.3 Q15.3 9.2 15.3 10.3 V14.9 Q15.3 15.7 14.5 15.7 H7.8 Q7.2 15.7 6.9 15.2 L4.7 11.9 Q4.3 11.2 5.1 10.8 Q6.8 10 8.3 11.2" fill="none" stroke="#1890ff" stroke-width="1" stroke-linejoin="round"/></svg><span class="op" style="left:14px;top:1px;line-height:52.7px">设备维修派单</span><svg style="position:absolute;left:106px;top:21px;width:13px;height:10px" viewBox="0 0 13 10"><path d="M0.5 5 Q6.5 -1.6 12.5 5 Q6.5 11.6 0.5 5 Z" fill="none" stroke="#1890ff" stroke-width="0.95"/><ellipse cx="6.5" cy="5" rx="2.3" ry="2.9" fill="none" stroke="#1890ff" stroke-width="0.95"/></svg><span class="op" style="left:121px;top:1px;line-height:52.7px">详情</span></div>
</div>
</div>
</div>
<div class="abs" style="left:1079px;top:864px;line-height:31px;font-size:14.3px;color:#606266;white-space:nowrap"><span class="a">共 37665 </span>条</div>
<div class="abs" style="left:1170px;top:864px;width:110px;height:31px;border:1px solid #dcdfe6;border-radius:3px;font-size:14.3px;color:#606266;line-height:29px;padding-left:21px;padding-top:2px">10条<span class="a">/</span>页<svg style="position:absolute;left:91px;top:13.5px;width:10px;height:6px" viewBox="0 0 10 6"><path d="M0.5 0.5 L5 5 L9.5 0.5" fill="none" stroke="#c0c4cc" stroke-width="1"/></svg></div>
<div class="pg" style="left:1302px"><svg style="position:absolute;left:13px;top:10px;width:7px;height:11px" viewBox="0 0 7 11"><path d="M6 0.5 L1 5.5 L6 10.5" fill="none" stroke="#c0c4cc" stroke-width="1.4"/></svg></div>
<div class="pg" style="left:1347px;background:#1890ff;color:#fff">1</div>
<div class="pg" style="left:1391px">2</div>
<div class="pg" style="left:1435px">3</div>
<div class="pg" style="left:1479px">4</div>
<div class="pg" style="left:1523px">5</div>
<div class="pg" style="left:1567px">6</div>
<div class="pg" style="left:1612px">···</div>
<div class="pg" style="left:1656px;width:43px">3767</div>
<div class="pg" style="left:1709px"><svg style="position:absolute;left:13px;top:10px;width:7px;height:11px" viewBox="0 0 7 11"><path d="M1 0.5 L6 5.5 L1 10.5" fill="none" stroke="#606266" stroke-width="1.3"/></svg></div>
<div class="abs" style="left:1773px;top:865px;line-height:31px;font-size:14.3px;color:#606266;white-space:nowrap">前往</div>
<div class="abs" style="left:1807px;top:864px;width:51px;height:31px;border:1px solid #dcdfe6;border-radius:3px;font-size:14.3px;color:#606266;line-height:29px;text-align:center">1</div>
<div class="abs" style="left:1862px;top:865px;line-height:31px;font-size:14.3px;color:#606266;white-space:nowrap">页</div>
<div class="abs" style="left:1905px;top:0;width:15px;height:914px;background:#fafafa;z-index:5"></div>
<div class="abs" style="left:1890px;top:0;width:15px;height:914px;z-index:5;background:linear-gradient(to right,rgba(0,0,0,0),rgba(0,0,0,.025))"></div>
<svg class="abs" style="z-index:6;left:1907px;top:7px;width:11px;height:6px" viewBox="0 0 11 6"><path d="M0 6 L5.5 0 L11 6z" fill="#8a8a8a"/></svg>
<div class="abs" style="z-index:6;left:1908px;top:21px;width:9px;height:800px;border-radius:4.5px;background:#8a8a8a"></div>
<svg class="abs" style="z-index:6;left:1907px;top:902px;width:11px;height:6px" viewBox="0 0 11 6"><path d="M0 0 L5.5 6 L11 0z" fill="#8a8a8a"/></svg>
<div class="abs" style="left:0;top:0;width:1920px;height:1px;background:#e3e3e3;z-index:10"></div>
<div class="abs" style="left:0;top:913px;width:1920px;height:1px;background:#e6ebef;z-index:10"></div>
</body></html>
